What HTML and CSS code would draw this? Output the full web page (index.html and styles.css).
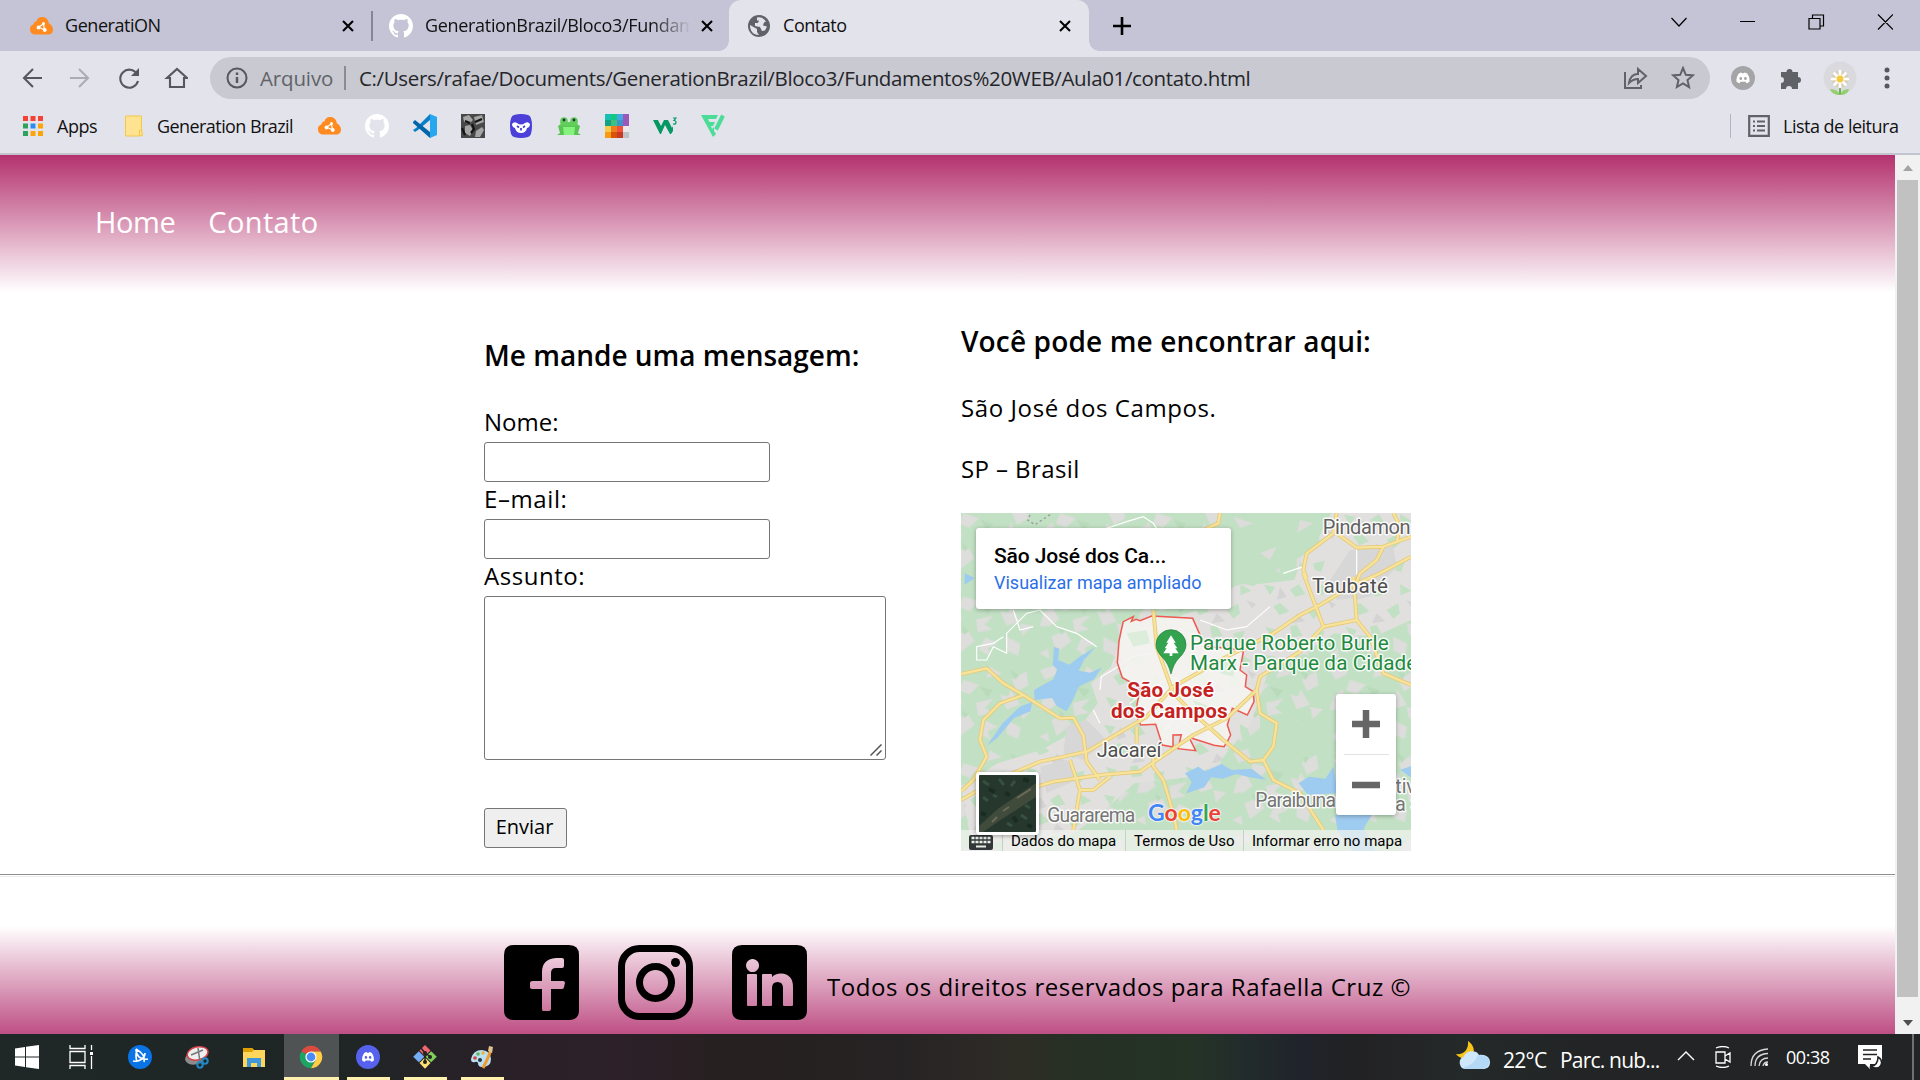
FILE: index.html
```html
<!DOCTYPE html>
<html lang="pt-BR">
<head>
<meta charset="utf-8">
<title>Contato</title>
<link rel="stylesheet" href="styles.css">
</head>
<body>
<svg class="defs" width="0" height="0" aria-hidden="true">
  <symbol id="cloud" viewBox="0 0 24 24"><path d="M6 20.500a5.300 5.300 0 0 1-1.500-10.300C5 8 6 7.500 7.500 7.500 8 4.500 10 3 13 3c4 0 6.500 2.500 6.800 6.300C22 10.500 24 12.500 24 15.500c0 3-2 5-5 5z" fill="#ff8a1f"/><path d="M9.500 13l5-3M9.500 13l6 3M14.500 10l1 6" stroke="#fff" stroke-width="1.200"/><circle cx="9.500" cy="13.500" r="1.900" fill="#fff"/><circle cx="14.500" cy="9.500" r="1.500" fill="#fff"/><circle cx="15.800" cy="16" r="1.900" fill="#fff"/></symbol>
  <symbol id="github" viewBox="0 0 16 16"><path fill="#fff" d="M8 0C3.580 0 0 3.580 0 8c0 3.540 2.290 6.530 5.470 7.590.4.070.55-.17.55-.38 0-.19-.01-.82-.01-1.490-2.010.37-2.530-.49-2.690-.94-.09-.23-.48-.94-.82-1.130-.28-.15-.68-.52-.01-.53.63-.01 1.080.58 1.230.82.72 1.210 1.870.87 2.330.66.07-.52.28-.87.51-1.070-1.780-.2-3.640-.89-3.640-3.950 0-.87.31-1.590.82-2.150-.08-.2-.36-1.020.08-2.120 0 0 .67-.21 2.200.82.64-.18 1.320-.27 2-.27s1.360.09 2 .27c1.530-1.040 2.200-.82 2.200-.82.44 1.100.16 1.920.08 2.120.51.56.82 1.270.82 2.150 0 3.070-1.870 3.750-3.650 3.950.29.25.54.73.54 1.480 0 1.070-.01 1.930-.01 2.200 0 .21.15.46.55.38A8.010 8.010 0 0 0 16 8c0-4.420-3.580-8-8-8z"/></symbol>
  <symbol id="discord" viewBox="0 0 24 24"><path fill="#fff" fill-rule="evenodd" d="M7 6.500q2-1.100 3.200-1.200l.6 1.100h2.400l.6-1.100q1.200.1 3.200 1.200c2.300 3 3.200 6.500 2.800 10-1.300 1-2.700 1.600-3.700 1.700l-1-1.700H8.900l-1 1.700c-1-.1-2.400-.7-3.700-1.700-.4-3.500.5-7 2.800-10zM9.200 10.800a1.700 1.800 0 1 0 .1 3.600 1.700 1.800 0 1 0-.1-3.600zm5.600 0a1.700 1.800 0 1 0 .1 3.600 1.700 1.800 0 1 0-.1-3.600z"/></symbol>
  <symbol id="x" viewBox="0 0 12 12"><path d="M1 1l10 10M11 1L1 11" stroke="#000" stroke-width="2.100"/></symbol>
</svg>

<div class="tabs">
  <div class="tab tab-a"><svg class="i24"><use href="#cloud"/></svg><span class="ui">GeneratiON</span><svg class="x"><use href="#x"/></svg></div>
  <i class="tab-sep"></i>
  <div class="tab tab-b"><svg class="i24"><use href="#github"/></svg><span class="ui fade">GenerationBrazil/Bloco3/Fundam</span><svg class="x"><use href="#x"/></svg></div>
  <div class="tab tab-c"><svg class="i22" viewBox="0 0 22 22"><circle cx="11" cy="11" r="11" fill="#5f6368"/><path d="M2 10l7 4v3l2 3C5 20 2 16 2 10zM9 2.500q6-1 9 4l-2 1-1 3 4 1-2 4-3 .5-2-4-5-1V8h3l1-2.500H9z" fill="#e3e3ec"/></svg><span class="ui">Contato</span><svg class="x"><use href="#x"/></svg></div>
  <svg class="plus" viewBox="0 0 18 18"><path d="M9 0v18M0 9h18" stroke="#000" stroke-width="2.600"/></svg>
  <svg class="win" viewBox="0 0 222 16"><g fill="none" stroke="#000" stroke-width="1.200"><path d="M.5 4L8 12l7.500-8M69 7.500h15M138 4.500h11v10.500h-11zM141.500 4.500V1h11v11h-3.500M207 .5l15 15M222 .5l-15 15"/></g></svg>
</div>

<div class="toolbar">
  <svg class="nav-icons" viewBox="0 0 166 24"><g fill="none" stroke="#55585c" stroke-width="2.100"><path d="M20 12H2M11 3l-9 9 9 9"/><path stroke="#acacb4" d="M48 12h18M57 3l9 9-9 9"/><path d="M115 8a9 9 0 1 0 1 7"/><path d="M148 21v-9h-3l10-9 10 9h-3v9z"/></g><path d="M117 2v8h-8z" fill="#55585c"/></svg>
  <div class="omni">
    <svg class="i22" viewBox="0 0 22 22"><circle cx="11" cy="11" r="9.500" fill="none" stroke="#55585c" stroke-width="2"/><path d="M11 10v6M11 5.500v2.500" stroke="#55585c" stroke-width="2.400"/></svg>
    <span class="ui t-arq">Arquivo</span><i class="omni-sep"></i>
    <span class="ui t-url">C:/Users/rafae/Documents/GenerationBrazil/Bloco3/Fundamentos%20WEB/Aula01/contato.html</span>
    <svg class="share" viewBox="0 0 72 24"><g fill="none" stroke="#5f6368" stroke-width="2"><path d="M2 6v16h16v-3M6 17c1-6 4-9 9-9V3l8 7-8 7v-4c-4 0-6 1-9 4z"/><path d="M60 2l2.800 6.800 7 .6-5.300 4.700 1.600 7L60 17.300 53.900 21l1.600-7-5.300-4.600 7-.6z"/></g></svg>
  </div>
  <svg class="ext" viewBox="0 0 162 36"><circle cx="12" cy="18" r="12" fill="#a5a5a7"/><use href="#discord" x="2" y="8" width="20" height="20"/>
    <path d="M50 12h5.500a3 3 0 1 1 6 0H67v5a3 3 0 1 1 0 6v6h-6a3 3 0 0 0-6 0h-5v-6a3 3 0 0 0 0-6z" fill="#5f6368"/>
    <circle cx="109" cy="18" r="16.500" fill="#dadade"/><path d="M109 20v15" stroke="#6fb24b" stroke-width="2"/><path d="M109 35q-8 0-10-6 8 0 10 6 2-6 9-6-1 6-9 6" fill="#91cf70"/><g stroke="#d9d0b4" stroke-width="2.600" stroke-linecap="round"><path d="M106 12l6 14M112 12l-6 14M102 16l14 6M116 16l-14 6"/></g><g stroke="#fff" stroke-width="2.600" stroke-linecap="round"><path d="M109 11v16M101 19h16M103.500 13.500l11 11M114.500 13.500l-11 11"/></g><circle cx="109" cy="19" r="3.400" fill="#f5c93c"/>
    <g fill="#55585c"><circle cx="156" cy="10" r="2.500"/><circle cx="156" cy="18" r="2.500"/><circle cx="156" cy="26" r="2.500"/></g></svg>
</div>

<div class="bookmarks">
  <svg class="apps" viewBox="0 0 20 20"><path d="M0 0h5v5H0zM7.500 0h5v5h-5zM15 0h5v5h-5z" fill="#f44336"/><path d="M0 7.500h5v5H0zM0 15h5v5H0z" fill="#2ea25a"/><path d="M7.500 7.500h5v5h-5z" fill="#2a8cf0"/><path d="M15 7.500h5v5h-5zM15 15h5v5h-5zM7.500 15h5v5h-5z" fill="#fba50a"/></svg>
  <span class="ui t-apps">Apps</span>
  <svg class="folder" viewBox="0 0 18 22"><path d="M0 1h17v14h1v6H0z" fill="#ffe391"/><path d="M.5 1h16v14l1 5.500-3 .5v-6h2M.5 1v20h14" fill="none" stroke="#f0c94d"/></svg>
  <span class="ui t-gb">Generation Brazil</span>
  <div class="favs">
    <svg class="i24"><use href="#cloud"/></svg>
    <svg class="i24"><use href="#github"/></svg>
    <svg class="i24" viewBox="0 0 24 24"><path d="M17 0L3 14l-3 2 2 2 3-2L17 6z" fill="#0a7fc8"/><path d="M0 8l2-2 15 12v6L0 9z" fill="#0065a9"/><path d="M17 0l7 3v18l-7 3z" fill="#27a7ee"/></svg>
    <svg class="i24" viewBox="0 0 24 24"><path d="M0 0h24v24H0z" fill="#484848"/><path d="M2 3l6-2 4 5-3 3-6-1zM13 3l8-2 2 7-8 3zM4 12l5-1 3 5-3 6-5-3zM15 17l6-4 2 3-4 7h-5z" fill="#a5a5a5"/><path d="M4 7l5 2M14 8l7-3M11 10l2 5-3 4M1 14l3 7" fill="none" stroke="#141414" stroke-width="2.200"/></svg>
    <svg class="i24" viewBox="0 0 24 24"><path d="M5 1q7-2 14 0 4 1 4 11t-4 11q-7 2-14 0-4-1-4-11T5 1z" fill="#4c40d8"/><path d="M3 10q2-3 5-1 4 3 8 0 3-2 5 1 0 3-3 4-1 5-6 5t-6-5q-3-1-3-4z" fill="#fff"/><path d="M8 12l2 1.500M16 12l-2 1.500M12 14v2.500" stroke="#4c40d8" stroke-width="1.800"/></svg>
    <svg class="i24" viewBox="0 0 24 24"><path d="M1 12q2-2 5-2h12q3 0 5 2l-2 7 3 2H0l3-2z" fill="#58c452"/><circle cx="7" cy="7" r="3.800" fill="#61ce5b"/><circle cx="17" cy="7" r="3.800" fill="#61ce5b"/><path d="M3.500 8h17v4h-17z" fill="#61ce5b"/><path d="M6 13h12l-1 8H7z" fill="#85f27e"/><circle cx="7" cy="6" r="1.400" fill="#233"/><circle cx="17" cy="6" r="1.400" fill="#233"/></svg>
    <svg class="i24" viewBox="0 0 24 24"><path fill="#13c0b2" d="M0 0h6v6H0z"/><path fill="#13c783" d="M6 0h6v6H6z"/><path fill="#42a8e6" d="M12 0h6v6h-6z"/><path fill="#9a59b8" d="M18 0h6v12h-6z"/><path fill="#16a085" d="M0 6h6v6H0z"/><path fill="#41bf80" d="M6 6h6v6H6z"/><path fill="#3e95c9" d="M12 6h6v6h-6z"/><path fill="#f5c94a" d="M0 12h6v6H0z"/><path fill="#ee7d20" d="M6 12h6v6H6z"/><path fill="#f1523b" d="M12 12h6v6h-6z"/><path fill="#e9e9ec" d="M18 12h6v6h-6z"/><path fill="#f79c0e" d="M0 18h6v6H0z"/><path fill="#d85309" d="M6 18h6v6H6z"/><path fill="#c93a25" d="M12 18h6v6h-6z"/><path fill="#bdc3c7" d="M18 18h6v6h-6z"/></svg>
    <svg class="i24" viewBox="0 0 24 24"><path d="M0 6h5l3 6 3-6h4l4 8 1-2v5l-2 3h-1l-5-9-4 9H7z" fill="#059862"/><path d="M20 4h3l-2 2.500q2 0 2 2T20 10" fill="none" stroke="#059862" stroke-width="1.200"/></svg>
    <svg class="i24" viewBox="0 0 24 24"><path d="M0 1h17l-2 4H7l1.500 3H14l-2 4h-2l1 3 2-2v4l2 3-3 3z" fill="#4bdc97"/><path d="M22 1.500l-7 14" stroke="#4bdc97" stroke-width="4"/></svg>
  </div>
  <i class="bm-sep"></i>
  <svg class="i22" viewBox="0 0 22 22"><path d="M1.200 1.200h19.600v19.600H1.200z" fill="none" stroke="#5f6368" stroke-width="2.200"/><path d="M5 6.500h2M5 11h2M5 15.500h2M9 6.500h8M9 11h8M9 15.500h8" stroke="#5f6368" stroke-width="2"/></svg>
  <span class="ui t-lista">Lista de leitura</span>
</div>

<div class="view">
  <div class="page">
    <header class="top"><nav><a class="n-home">Home</a><a class="n-con">Contato</a></nav></header>
    <main>
      <form class="form">
        <h2>Me mande uma mensagem:</h2>
        <label>Nome:</label><input type="text">
        <label class="l-mail">E–mail:</label><input type="text">
        <label class="l-sub">Assunto:</label>
        <div class="area"><textarea></textarea><svg class="grip" viewBox="0 0 12 12"><path d="M.5 11.500l11-11M6.500 11.500l5-5" stroke="#555" stroke-width="1.500"/></svg></div>
        <button type="button">Enviar</button>
      </form>
      <section class="where">
        <h2>Você pode me encontrar aqui:</h2>
        <p>São José dos Campos.</p>
        <p class="uf">SP – Brasil</p>
        <div class="map">
          <svg class="map-art" viewBox="63 -201 1350 1014">
            <defs>
              <pattern id="gs" width="290" height="250" patternUnits="userSpaceOnUse"><path fill="#dddddb" d="M10 20l44-14 8 26-36 18zM70 50l48 14-30 30-30-14zM150 10l36 22-48 12zM215 48l44-24 6 42-34 18zM20 100l26-22 22 40-28 20-30 2zM108 118l54-12-28 28 24 14-44 10zM180 92l24 8 8-22 28 46-40 14zM240 130l38 8-30 30zM44 170l40-18 20 32-44 34zM118 210l18-38 38 18-30 14 8 26zM200 170l42 22-8 36-34-16zM8 220l26-14 4 30z"/><path fill="#b9dabb" d="M120 70l40 10-18 22zM66 140l20 14-14 10zM210 20l26 14-10 16z"/></pattern>
              <pattern id="vs" width="240" height="210" patternUnits="userSpaceOnUse"><path fill="#c2e0c3" d="M12 14l34 6-16 26zM90 30l26-18 20 30-30 8zM180 12l34 20-32 14zM40 80l20-12 28 26-30 12zM140 90l34-20 6 30-20 16zM16 140l34 10-14 26zM90 140l20-6 18 34-32 4zM160 160l34-8-10 34-20-6z"/><path fill="#d5d4d4" d="M60 20l20 30-30 10zM110 100l26 24-40 6zM200 60l28 12-12 14z"/></pattern>
            </defs>
            <path fill="#c2e0c3" d="M63-201h1350V813H63z"/><path fill="url(#gs)" d="M63-201h1350V813H63z"/>
            <path fill="#e1e0de" d="M63 620l110-70 130-40 110-60 60-80-20-60 60-50 30-100 140-40 120-40 80-60 180-20 40-120 60-60 60-121h190V120l-110 50-120-10-90 60-110 60-50 150-90 110-80 50-180 20-100 90-80 60-170 70-130 10z"/>
            <path fill="url(#vs)" d="M63 620l110-70 130-40 110-60 60-80-20-60 60-50 30-100 140-40 120-40 80-60 180-20 40-120 60-60 60-121h190V120l-110 50-120-10-90 60-110 60-50 150-90 110-80 50-180 20-100 90-80 60-170 70-130 10z"/>
            <path fill="#c2e0c3" d="M870-201h300l-50 110-110 60-70 50-67-20zM960 390l60 40 150-20 20 130-80-20-60 50-90-60z"/>
            <path fill="#dcdcda" d="M880-190l60 20-40 14zM960-80l50-20-20 40zM1080-180l40 10-50 30z"/>
            <path fill="#d8d7d7" d="M1230-90l130-10 10 60-80 90-100 10-20-60zM380 440l60-20 60 60-70 60-60-20zM300 560l80-20 30 60-90 40z"/>
            <path fill="#9ecbf0" d="M342 200l16 6-4 34 34 14 34-26 44-26-34 38-16 32 34 6 36-16-24 36-46 22-16 38-20 36-30-16-14-24-52 6-2-30 58-32 12-30-14-12zM74-20l30 14-30 20zM240 380l36-14-4 28-50 20-50 60-30 22 46-66zM735 580l40-20 20 14 50-22 30 18 60-4 44 34-50-8-40-10-40 14-36-4-20 30-54 18 16-34zM1076 610l30-20 50 6 24-36 14 80-90 4zM1185 705h110l-24 40 36 68h-70l-44-60zM1380 570l33-12v34z"/>
            <g fill="none" stroke="#fff" stroke-width="3.500" stroke-linejoin="round"><path d="M480 430l-20-40M220 90l20 60 40-10M190 170l-30 20-50 10v40l30 0 20-40 40 20v-60l60-60 40-10M300 90l50 50 60 20 60 40M780 120l80 30 60-10 70-60M500-155l60-20 50-15 30 20 20 30M1250-97v80M1030-20l60-20M480 330l4-40 50-30 40-30 60-10M610 340l80-50 60 20M660 470l50-60 50 40M570 370l50-40"/></g>
            <path fill="#f6f4f1" fill-opacity=".88" stroke="#ec5a52" stroke-width="4.500" d="M545 145l5-20 30-15-6 14 14-6 12 4 35-14 123 7 20 45 22 40 70 5 40 10-10 55 20 15-4 35 24 15 2 30-20 40-45-20-15 50 10 30-10 20-10 15-30-4-75-24 20 40-53-6 10-42-25 1v36l-32-6-20-62-45 2-15-32 5-35 10-45-55-30-15-45 5-65z"/>
            <path fill="#dceedb" d="M560 160l60-10 10 40-50 10zM850 240l40 10-10 40-40-10zM760 360l50 20-30 30z"/>
            <g fill="none" stroke-linejoin="round" stroke="#e4ca77" stroke-width="12"><path d="M63 282l77-17 50 45 60 35 110 70 40-2 30 54 10 78 40 55M250 345l-70 25-50 50-10 60 20 50-40 70-37 34M63 660l107-60 130-55 140-30 180-105 80-90 160-90 140-70 80-55 60-30 100-60 80-35 93-50M290 620l50-15 140-20 120-10 80-55 80-55 100-50 90-85 10-40 120-75 70-75 100-20M640 90l10 110 50 140 60 60 90 80 80 65 40-5 30 60 80 40 70 110M950 330l10 70 50 30-10 70-30 40M640 500v60l30 40 30 100 10 50M390 540l30 90h40l50-40M420 630l-20 120M590 440v50M1090-20l60 160M1240-10l10 130 40 50 40 110 83 35M840-201l-5 31-45 20M1190-201l-10 61-80 60-10 50 10 25M1190-140l60 43 80-3 83-30M1330-100l-20 40-50 40-16 40M1360-201l20 40-10 50"/></g>
            <g fill="none" stroke-linejoin="round" stroke="#f8e39c" stroke-width="7"><path d="M63 282l77-17 50 45 60 35 110 70 40-2 30 54 10 78 40 55M250 345l-70 25-50 50-10 60 20 50-40 70-37 34M63 660l107-60 130-55 140-30 180-105 80-90 160-90 140-70 80-55 60-30 100-60 80-35 93-50M290 620l50-15 140-20 120-10 80-55 80-55 100-50 90-85 10-40 120-75 70-75 100-20M640 90l10 110 50 140 60 60 90 80 80 65 40-5 30 60 80 40 70 110M950 330l10 70 50 30-10 70-30 40M640 500v60l30 40 30 100 10 50M390 540l30 90h40l50-40M420 630l-20 120M590 440v50M1090-20l60 160M1240-10l10 130 40 50 40 110 83 35M840-201l-5 31-45 20M1190-201l-10 61-80 60-10 50 10 25M1190-140l60 43 80-3 83-30M1330-100l-20 40-50 40-16 40M1360-201l20 40-10 50"/></g>
            <path d="M330-196l-45 30-22-14 10-21" fill="none" stroke="#999" stroke-width="4" stroke-dasharray="7 8"/>
            <path fill="#34a34f" stroke="#1e7f38" stroke-width="2" d="M693 282q-8-32-24-48-21-20-21-40a45 45 0 0 1 90 0q0 20-21 40-16 16-24 48z"/><path fill="#fff" d="M693 166l14 22h-6l11 17h-6l10 15h-19v8h-8v-8h-19l10-15h-6l11-17h-6z"/>
            <g class="lbl">
              <text x="1148" y="-138" font-size="60" fill="#616161" textLength="264">Pindamon</text>
              <text x="1116" y="39" font-size="62" fill="#4f4f4f" textLength="228">Taubaté</text>
              <text x="470" y="532" font-size="60" fill="#4f4f4f" textLength="194">Jacareí</text>
              <text x="322" y="727" font-size="58" fill="#757575" textLength="264">Guararema</text>
              <text x="946" y="682" font-size="58" fill="#757575" textLength="242">Paraibuna</text>
              <text x="1366" y="640" font-size="58" fill="#757575">tiv</text>
              <text x="1366" y="692" font-size="58" fill="#757575">a S</text>
              <g fill="#1d8a40"><text x="750" y="209" font-size="62" textLength="596">Parque Roberto Burle</text><text x="750" y="271" font-size="62" textLength="682">Marx - Parque da Cidade</text></g>
              <g fill="#c5221f" font-weight="700"><text x="562" y="352" font-size="62" textLength="260">São José</text><text x="513" y="415" font-size="62" textLength="350">dos Campos</text></g>
            </g>
          </svg>
          <div class="card"><strong>São José dos Ca...</strong><a>Visualizar mapa ampliado</a></div>
          <svg class="zoom" viewBox="0 0 60 121"><path d="M16 30h28M30 16v28M16 91h28" stroke="#666" stroke-width="6.500"/><path d="M8 60.500h45" stroke="#e2e2e2"/></svg>
          <svg class="sat" viewBox="0 0 57 57"><path d="M0 0h57v57H0z" fill="#26382d"/><path d="M57 8v14L20 46 4 57H0v-6l20-18z" fill="#414b3b"/><path d="M52 14L38 23M30 32l-6 4M18 42l-5 5" stroke="#6a6b58" stroke-width="2"/><path d="M4 6l6 4M20 4l5 6M36 6l-4 5M4 22l5 4M42 40l6 4M28 48l5 3M46 30l5 3M14 20l4 2" stroke="#36503f" stroke-width="3"/><path d="M10 14l6 3M44 4l6 2M34 42l4 5M2 38l5 2M26 18l5 2M48 50l5 2" stroke="#1a2c22" stroke-width="4"/></svg>
          <div class="google"><b class="bl">G</b><b class="rd">o</b><b class="ye">o</b><b class="bl">g</b><b class="gr">l</b><b class="rd">e</b></div>
          <div class="terms">
            <svg viewBox="0 0 24 15"><path fill="#333639" d="M2 0h20q2 0 2 2v11q0 2-2 2H2q-2 0-2-2V2q0-2 2-2z"/><path stroke="#e6eee6" stroke-width="2.500" stroke-dasharray="3 1" d="M2.500 3h19.500M2.500 7h19.500"/><path stroke="#e6eee6" stroke-width="2" d="M7 11.500h10"/></svg>
            <span class="c1">Dados do mapa</span><span class="c2">Termos de Uso</span><span class="c3">Informar erro no mapa</span>
          </div>
        </div>
      </section>
    </main>
    <hr>
    <footer>
      <svg viewBox="0 0 75 75"><path fill-rule="evenodd" d="M10 0h55q10 0 10 10v55q0 10-10 10H10Q0 75 0 65V10Q0 0 10 0zM39 66h6q2 0 2-2V44h11q2 0 2-2l1-4q0-2-2-2H47v-8q0-5 5-5h6q2 0 2-2v-6q0-2-2-2h-6q-14 1-14 14v9h-9q-3 0-3 2v4q0 2 3 2h9v20q0 2 1 2z"/></svg>
      <svg viewBox="0 0 75 75" fill="none" stroke="#000" stroke-width="7"><rect x="3.500" y="3.500" width="68" height="68" rx="18"/><circle cx="37.500" cy="37.500" r="16"/><circle cx="57.500" cy="17.500" r="4.500" fill="#000" stroke="none"/></svg>
      <svg viewBox="0 0 75 75"><path fill-rule="evenodd" d="M10 0h55q10 0 10 10v55q0 10-10 10H10Q0 75 0 65V10Q0 0 10 0zM20.500 14a6.500 6.500 0 1 0 .1 0zM16 29q-1 0-1 1v30q0 1 1 1h8q1 0 1-1V30q0-1-1-1zM31 29q-1 0-1 1v30q0 1 1 1h8q1 0 1-1V43q0-6 5.500-6t5.500 6v17q0 1 1 1h8q1 0 1-1V42q0-13-12-13.500-6 0-9 3.500v-2q0-1-1-1z"/></svg>
      <span class="rights">Todos os direitos reservados para Rafaella Cruz ©</span>
    </footer>
  </div>
  <div class="scroll"><i class="up"></i><div class="thumb"></div><i class="down"></i></div>
</div>

<div class="taskbar">
  <div class="app sm"><svg class="i24" viewBox="0 0 24 24"><path fill="#fff" d="M0 3.500L10 2v9.500H0zM11 1.800L24 0v11.500H11zM0 12.500h10V22L0 20.500zM11 12.500h13V24l-13-1.800z"/></svg></div>
  <div class="app sm task"><svg class="i24" viewBox="0 0 24 24"><g fill="none" stroke="#fff" stroke-width="1.300"><path d="M1 0v3.500h15V0M1 6.500h15v11H1zM1 24v-3.500h15V24M22.500 0v5M22.500 11v13"/></g><path d="M21 7h3v3h-3z" fill="#fff"/></svg></div>
  <div class="app"><svg class="i24" viewBox="0 0 24 24"><circle cx="12" cy="12" r="12" fill="#0a73e6"/><g fill="none" stroke="#fff" stroke-width="1.600"><path d="M8 4q5 3 7 6 2 4 1 7M5 16q5 1 9-2 3-2 3-6M20 14q-5 1-9-2-3-3-3-8M9 5q-2 5 0 12"/></g></svg></div>
  <div class="app"><svg class="i24" viewBox="0 0 24 24"><ellipse cx="10" cy="13" rx="10" ry="6.500" fill="#8c8c8c" transform="rotate(-12 10 13)"/><ellipse cx="12.500" cy="8.500" rx="10.500" ry="6.500" fill="#eee" stroke="#d6414a" stroke-width="1.500" transform="rotate(-12 12 8)"/><path d="M6 10l12-5M13 3l2 14" stroke="#777" stroke-width="1.500"/><g fill="none" stroke="#2387c4" stroke-width="2"><circle cx="20" cy="16" r="2.700"/><circle cx="15" cy="20" r="2.700"/></g></svg></div>
  <div class="app"><svg class="i24" viewBox="0 0 24 24"><path d="M1 3h9l2 2h11v17H1z" fill="#ffd65c"/><path d="M1 3h9l2 2-2 2H1z" fill="#e0a100"/><path d="M5 13h14v9h-4v-4H9v4H5z" fill="#3f97dc"/></svg></div>
  <div class="app run on"><svg class="i24" viewBox="0 0 24 24"><path d="M12 12L2.300 6.400A11.200 11.200 0 0 1 21.700 6.400H12z" fill="#dd4b3e"/><path d="M12 12L2.300 6.400A11.200 11.200 0 0 0 12 23.200l4.850-8.400z" fill="#1da462"/><path d="M12 6.400h9.700A11.200 11.200 0 0 1 12 23.200l4.850-8.400z" fill="#ffcd46"/><circle cx="12" cy="12" r="5.600" fill="#fff"/><circle cx="12" cy="12" r="4.400" fill="#4c8bf5"/></svg></div>
  <div class="app run"><svg class="i24" viewBox="0 0 24 24"><circle cx="12" cy="12" r="12" fill="#5662ee"/><use href="#discord" x="3" y="3" width="18" height="18"/></svg></div>
  <div class="app run"><svg class="i24" viewBox="0 0 24 24"><path d="M12 0l5.500 5.500L12 11 6.500 5.500z" fill="#f0686f"/><path d="M5.800 6.200l5.500 5.500-5.500 5.500L.2 11.700z" fill="#74aef5"/><path d="M18.200 6.200l5.600 5.500-5.600 5.500-5.500-5.500z" fill="#7fd05a"/><path d="M12 12.500l5.500 5.500-5.500 5.800L6.500 18z" fill="#ffe173"/><path d="M8 3l4 5v10M12 8l6 4" stroke="#222" stroke-width="1.500" fill="none"/><circle cx="12" cy="8" r="2" fill="#222"/><circle cx="12" cy="17" r="2" fill="#222"/><circle cx="17" cy="12" r="2" fill="#222"/></svg></div>
  <div class="app run"><svg class="i24" viewBox="0 0 24 24"><path d="M1 14Q3 5 12 5q9 1 9 9t-9 8q-4 0-4-4-1-2-3-1-4 1-4-3z" fill="#b9dff0"/><circle cx="5" cy="13" r="1.800" fill="#d64242"/><circle cx="8" cy="9" r="1.800" fill="#5db85a"/><circle cx="13" cy="8" r="1.800" fill="#e8b53b"/><circle cx="10" cy="15" r="2" fill="#243642"/><path d="M21 5l-4 10-4 8" fill="none" stroke="#ef9a31" stroke-width="3"/><path d="M19 1l4 1-1 6-4-2z" fill="#e3c294"/></svg></div>
  <div class="tray">
    <svg class="wx" viewBox="0 0 34 28"><path d="M12 0c8 5 8 16-1 17-5 1-9-1-11-4 7 1 13-4 12-13z" fill="#f7c51c"/><path d="M9 28a6.500 6.500 0 0 1-1-12.500C9 10 20 8 23 14c6-1 11 2 11 7s-3 7-7 7z" fill="#cfe7fa"/><path d="M8 26q10-2 14-12 12 0 11 8-2 6-8 6H9z" fill="#b3d9f6"/></svg>
    <span class="ui temp">22°C</span><span class="ui cond">Parc. nub...</span>
    <svg class="chev" viewBox="0 0 18 11"><path d="M1 10l8-8 8 8" fill="none" stroke="#fff" stroke-width="1.400"/></svg>
    <svg class="cam" viewBox="0 0 16 22"><path d="M1 6h9v11H1zM10 10l5-3v9l-5-3M1 2q7-3 13 0M1 20q7 3 13 0" fill="none" stroke="#fff" stroke-width="1.300"/></svg>
    <svg class="wifi" viewBox="0 0 18 18"><path d="M1 18Q1 2 18 1M5 18Q5 6 18 5.500M9 18q1-8 9-8M13 18q1-4 5-4" fill="none" stroke="#d8d8d8" stroke-width="1.300"/><circle cx="16.500" cy="16.500" r="1.500" fill="#fff"/></svg>
    <span class="ui clock">00:38</span>
    <svg class="note" viewBox="0 0 24 24"><path d="M0 0h24v19H12v5l-5-5H0z" fill="#fff"/><path d="M5 5h14M5 9.500h14M5 14h8" stroke="#222" stroke-width="1.500"/><path d="M20 12q5 3 3 8t-10 2q7-2 7-10z" fill="#fff" stroke="#222" stroke-width="1.500"/></svg>
    <i class="desk"></i>
  </div>
</div>
</body>
</html>
```
FILE: styles.css
```css
*{box-sizing:border-box}
body{margin:0;width:1920px;height:1080px;overflow:hidden;background:#fff;color:#000;font:24px/30px "Open Sans","Noto Sans",sans-serif}
svg{flex:none;display:block}
i{flex:none;display:block}
.defs{position:absolute}
.ui{font-size:18px;line-height:24px;letter-spacing:-.45px;white-space:nowrap;color:#111}
.i24{width:24px;height:24px}
.i22{width:22px;height:22px}
.x{width:12px;height:12px;margin-left:auto}

/* browser tabs */
.tabs{display:flex;height:51px;align-items:center;background:#c4c4d6;padding-right:27px}
.tab{display:flex;align-items:center;height:51px}
.tab .ui{margin:-1px 0 0 12px}
.tab-a{width:371px;padding:0 17px 0 29px}
.tab-sep{width:2px;height:30px;background:#85859a}
.tab-b{width:356px;padding:0 16px}
.tab-b .fade{letter-spacing:-.32px;width:264px;overflow:hidden;-webkit-mask-image:linear-gradient(90deg,#000 226px,transparent 266px);mask-image:linear-gradient(90deg,#000 226px,transparent 266px)}
.tab-c{position:relative;width:360px;padding:0 18px 0 19px;background:#e3e3ec;border-radius:12px 12px 0 0}
.tab-c::before,.tab-c::after{content:"";position:absolute;bottom:0;width:10px;height:10px}
.tab-c::before{left:-10px;background:radial-gradient(circle at 0 0,transparent 9.500px,#e3e3ec 10px)}
.tab-c::after{right:-10px;background:radial-gradient(circle at 100% 0,transparent 9.500px,#e3e3ec 10px)}
.tab-c .ui{margin-left:13px}
.plus{width:18px;height:18px;margin-left:24px}
.win{width:222px;height:16px;margin:-8px 0 0 auto}

/* address bar */
.toolbar{display:flex;height:54px;align-items:center;background:#e3e3ec;padding-left:22px}
.nav-icons{width:166px;height:24px}
.omni{display:flex;align-items:center;width:1500px;height:42px;margin:0 21px 0 22px;padding:0 15px 0 16px;border-radius:21px;background:#c9c9d1}
.omni .ui{font-size:20.500px}
.omni .t-arq{width:84px;margin-left:12px;letter-spacing:-.15px;color:#5f6368}
.omni-sep{width:2px;height:24px;background:#8b8b93}
.omni .t-url{margin-left:13px;letter-spacing:-.35px;color:#25262a}
.share{width:72px;height:24px;margin-left:auto}
.ext{width:162px;height:36px}

/* bookmarks */
.bookmarks{display:flex;height:50px;align-items:center;padding:0 0 6px 23px;background:#e3e3ec;border-bottom:2px solid #c4c4d0}
.bookmarks .ui{margin-top:-1px}
.apps{width:20px;height:20px}
.t-apps{width:68px;margin-left:14px}
.folder{width:18px;height:22px}
.t-gb{width:161px;margin-left:14px}
.bookmarks .t-gb{letter-spacing:-.57px}
.favs{display:flex;gap:24px;margin-left:-1px}
.bm-sep{width:1px;height:24px;margin:0 17px 0 auto;background:#b5b5c2}
.t-lista{width:137px;margin-left:13px}
.bookmarks .t-lista{letter-spacing:-.5px}

/* page */
.view{display:flex;height:879px}
.page{width:1895px;height:879px;overflow:hidden;background:#fff}
.top{height:137px;padding:49px 0 0 95px;background:linear-gradient(#b4326e,#fff)}
nav{display:flex;gap:33px;font-size:29px;line-height:36px;color:#fff}
.n-home{letter-spacing:-.4px}
.n-con{letter-spacing:.35px}
main{display:flex;height:582px;padding-left:484px}
.form{display:flex;flex-direction:column;align-items:flex-start;width:477px;padding-top:45px}
h2{margin:0;font-size:28px;line-height:36px;font-weight:600}
label{margin-top:2px;line-height:30px}
h2 + label{margin-top:34px}
.l-mail{letter-spacing:.6px}
.l-sub{letter-spacing:.55px}
input,textarea{margin:5px 0 0;border:1px solid #767676;border-radius:3px;background:#fff}
input{width:286px;height:40px}
.area{position:relative;height:169px}
textarea{display:block;width:402px;height:164px;resize:none}
.grip{position:absolute;right:4px;bottom:4px;width:12px;height:12px}
button{width:83px;height:40px;margin-top:48px;padding:0 2px 2px 0;border:1px solid #767676;border-radius:3px;background:#efefef;font:20px/30px "Open Sans",sans-serif;color:#000}
.where{padding-top:31px}
.where h2{letter-spacing:.15px}
p{margin:34px 0 0;letter-spacing:.6px}
.uf{margin-top:31px;letter-spacing:.4px}
hr{margin:0;height:3px;border:0;border-top:1px solid #8f8f8f;border-bottom:1px solid #ececec}
footer{display:flex;gap:39px;height:157px;padding:68px 0 0 504px;background:linear-gradient(#fff 49px,#be4f84 157px)}
footer svg{width:75px;height:75px}
.rights{margin:27px 0 0 -19px;letter-spacing:.56px;white-space:nowrap}

/* map */
.map{position:relative;width:450px;height:338px;margin-top:29px;overflow:hidden;font-family:Roboto,sans-serif}
.map-art{width:450px;height:338px}
.lbl text{paint-order:stroke;stroke:#fff;stroke-width:9px;stroke-linejoin:round;stroke-opacity:.85}
.card{position:absolute;left:15px;top:15px;width:255px;height:81px;padding:14px 18px;border-radius:3px;background:#fff;box-shadow:0 1px 4px rgba(0,0,0,.3)}
.card strong,.card a{display:block;white-space:nowrap}
.card strong{font-size:21px;line-height:28px;font-weight:500;letter-spacing:-.12px}
.card a{font-size:18px;line-height:26px;color:#2a6fe8}
.zoom{position:absolute;left:375px;top:181px;width:60px;height:121px;border-radius:3px;background:#fff;box-shadow:0 1px 4px rgba(0,0,0,.3)}
.sat{position:absolute;left:15px;top:259px;width:63px;height:63px;border:3px solid #fff;border-radius:4px;box-shadow:0 1px 4px rgba(0,0,0,.35);z-index:2}
.google{position:absolute;left:187px;top:284px;display:flex;font:700 23px/30px Lato,sans-serif;letter-spacing:-.1px;text-shadow:0 0 2px #fff,0 0 2px #fff,0 0 2px #fff}
.google b{font-weight:700}
.bl{color:#4285f4}.rd{color:#ea4335}.ye{color:#fbbc05}.gr{color:#34a853}
.terms{position:absolute;left:0;bottom:0;display:flex;align-items:center;width:450px;height:21px;padding-left:8px;background:rgba(241,243,240,.72);font-size:15px;line-height:21px;white-space:nowrap}
.terms svg{width:24px;height:15px;margin:4px 9px 0 0}
.terms span{border-left:1px solid #c4d4c4;height:21px;line-height:22px}
.c1{width:123px;padding-left:8px}
.c2{width:118px;padding-left:8px}
.c3{padding-left:8px}

/* scrollbar */
.scroll{display:flex;flex-direction:column;align-items:center;width:25px;background:#f1f1f1}
.up,.down{width:0;height:0;border:5.500px solid transparent}
.up{margin-top:5px;border-bottom:6px solid #a3a3a3}
.down{margin-top:23px;border-top:6px solid #505050}
.thumb{width:21px;height:817px;margin-top:9px;background:#c1c1c1}

/* taskbar */
.taskbar{display:flex;height:46px;background:linear-gradient(90deg,#1f2727 0,#1f2525 340px,#2b2028 530px,#2d2029 620px,#26201f 730px,#262324 900px,#2e2c26 1010px,#263025 1080px,#243326 1190px,#222b2c 1250px,#20232b 1300px,#222223 1360px,#24292a 1460px,#222425 1600px,#232425)}
.app{display:flex;align-items:center;justify-content:center;position:relative;width:57px}
.sm{width:54px}
.task{margin-right:3.500px}
.run::after{content:"";position:absolute;left:7px;right:7px;bottom:0;height:3px;background:#fff0ae}
.on{width:55px;margin:0 1px;background:#505354}
.on::after{left:0;right:0}
.tray{display:flex;align-items:center;width:464px;margin-left:auto}
.tray .ui{color:#fff}
.wx{width:34px;height:28px;margin:-4px 13px 0 0}
.tray .temp,.tray .cond{font-size:21px;margin-top:5px}
.tray .temp{width:57px;letter-spacing:-.7px}
.tray .cond{width:117px;letter-spacing:-.8px}
.chev{width:18px;height:11px;margin-top:-4px}
.cam{width:16px;height:22px;margin-left:20px}
.wifi{width:18px;height:18px;margin-left:19px}
.clock{width:55px;margin-left:18px}
.note{width:24px;height:24px;margin-left:17px}
.desk{width:2px;height:46px;margin-left:30px;background:#6f7071}
```
